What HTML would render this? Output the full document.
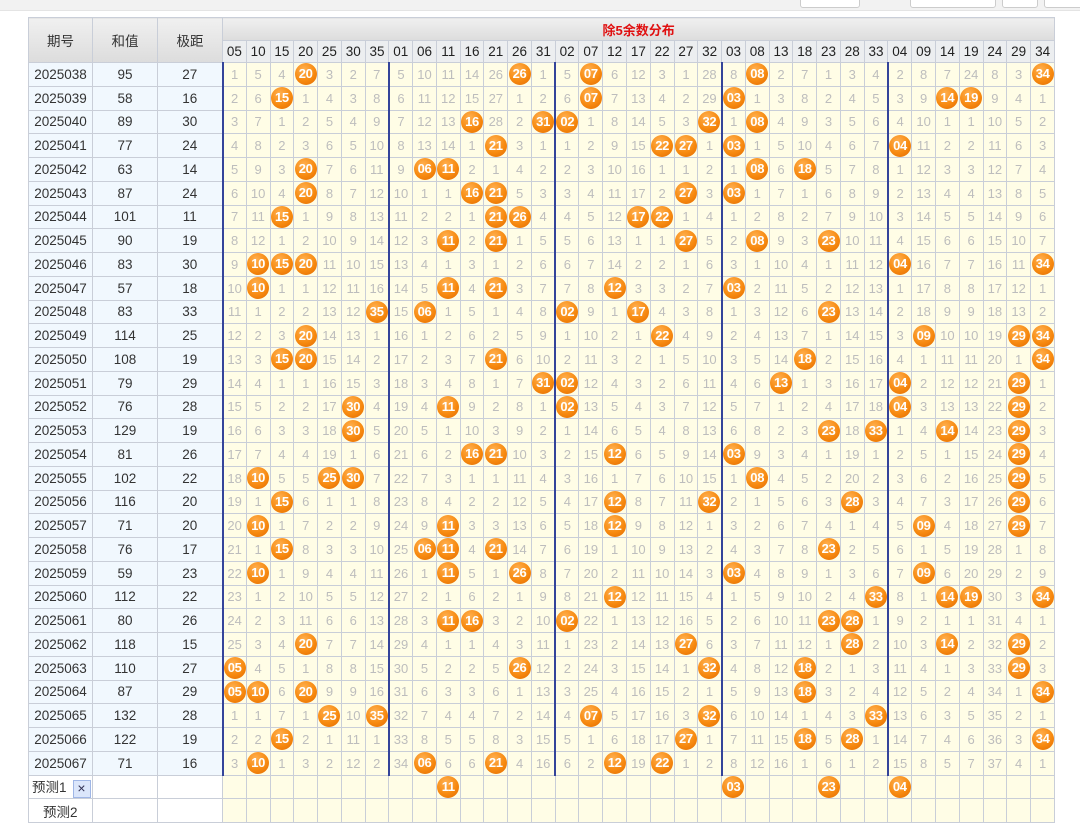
<!DOCTYPE html>
<html><head><meta charset="utf-8"><style>
html,body{margin:0;padding:0;background:#fff;width:1080px;height:810px;overflow:hidden;font-family:"Liberation Sans","Noto Sans CJK SC",sans-serif}
.top{position:absolute;left:0;top:0;width:1080px;height:10px;background:#f2f2f2;border-bottom:1px solid #e4e4e4}
.top span{position:absolute;top:-6px;height:12px;background:#fff;border:1px solid #ccc;border-radius:3px}
table{position:absolute;left:28px;top:17px;border-collapse:collapse;table-layout:fixed;width:1026px}
td,th{border:1px solid #c9ced8;padding:0;text-align:center;font-size:13px;font-weight:normal;white-space:nowrap;overflow:hidden}
thead th{background:linear-gradient(#f0f0f0,#dcdcdc);color:#333;font-size:13.5px}
.h1 th{height:22px}
.h2 th{height:21px;background:#eceef0;color:#222;font-size:13.5px}
.t{color:#e01010!important;font-weight:bold!important;font-size:13px}
tbody tr{height:23.76px}
tbody th{background:#f1f8fe;color:#333;font-size:13.5px}
tbody td{background:#fffde6;color:#bdbdbd}
tbody tr.d td:nth-child(4),tbody tr.d td:nth-child(11),tbody tr.d td:nth-child(18),tbody tr.d td:nth-child(25),tbody tr.d td:nth-child(32){border-left:2px solid #34449a}
i{font-style:normal;display:inline-block;width:22px;height:22px;line-height:22px;border-radius:50%;background:radial-gradient(circle at 40% 30%,#ffb050 0%,#f78a10 55%,#e26a00 100%);color:#fff;font-weight:bold;font-size:13px;vertical-align:middle;letter-spacing:-0.3px}
.p th{background:#fff;text-align:left;padding-left:3px;color:#333}
.p th.e{background:#fff}
.x{display:inline-block;width:16px;height:16px;line-height:15px;background:#dbe6fb;border:1px solid #9fb6e6;color:#335;font-size:14px;text-align:center;margin-left:6px;vertical-align:middle}
</style></head><body>
<div class="top"><span style="left:800px;width:58px"></span><span style="left:910px;width:84px"></span><span style="left:1002px;width:34px"></span><span style="left:1044px;width:40px"></span></div>
<table>
<colgroup><col style="width:64px"><col style="width:65px"><col style="width:65px"><col span="35" style="width:23.77px"></colgroup>
<thead>
<tr class="h1"><th rowspan="2">期号</th><th rowspan="2">和值</th><th rowspan="2">极距</th><th colspan="35" class="t">除5余数分布</th></tr>
<tr class="h2"><th>05</th><th>10</th><th>15</th><th>20</th><th>25</th><th>30</th><th>35</th><th>01</th><th>06</th><th>11</th><th>16</th><th>21</th><th>26</th><th>31</th><th>02</th><th>07</th><th>12</th><th>17</th><th>22</th><th>27</th><th>32</th><th>03</th><th>08</th><th>13</th><th>18</th><th>23</th><th>28</th><th>33</th><th>04</th><th>09</th><th>14</th><th>19</th><th>24</th><th>29</th><th>34</th></tr>
</thead>
<tbody>
<tr class="d"><th>2025038</th><th>95</th><th>27</th><td>1</td><td>5</td><td>4</td><td><i>20</i></td><td>3</td><td>2</td><td>7</td><td>5</td><td>10</td><td>11</td><td>14</td><td>26</td><td><i>26</i></td><td>1</td><td>5</td><td><i>07</i></td><td>6</td><td>12</td><td>3</td><td>1</td><td>28</td><td>8</td><td><i>08</i></td><td>2</td><td>7</td><td>1</td><td>3</td><td>4</td><td>2</td><td>8</td><td>7</td><td>24</td><td>8</td><td>3</td><td><i>34</i></td></tr>
<tr class="d"><th>2025039</th><th>58</th><th>16</th><td>2</td><td>6</td><td><i>15</i></td><td>1</td><td>4</td><td>3</td><td>8</td><td>6</td><td>11</td><td>12</td><td>15</td><td>27</td><td>1</td><td>2</td><td>6</td><td><i>07</i></td><td>7</td><td>13</td><td>4</td><td>2</td><td>29</td><td><i>03</i></td><td>1</td><td>3</td><td>8</td><td>2</td><td>4</td><td>5</td><td>3</td><td>9</td><td><i>14</i></td><td><i>19</i></td><td>9</td><td>4</td><td>1</td></tr>
<tr class="d"><th>2025040</th><th>89</th><th>30</th><td>3</td><td>7</td><td>1</td><td>2</td><td>5</td><td>4</td><td>9</td><td>7</td><td>12</td><td>13</td><td><i>16</i></td><td>28</td><td>2</td><td><i>31</i></td><td><i>02</i></td><td>1</td><td>8</td><td>14</td><td>5</td><td>3</td><td><i>32</i></td><td>1</td><td><i>08</i></td><td>4</td><td>9</td><td>3</td><td>5</td><td>6</td><td>4</td><td>10</td><td>1</td><td>1</td><td>10</td><td>5</td><td>2</td></tr>
<tr class="d"><th>2025041</th><th>77</th><th>24</th><td>4</td><td>8</td><td>2</td><td>3</td><td>6</td><td>5</td><td>10</td><td>8</td><td>13</td><td>14</td><td>1</td><td><i>21</i></td><td>3</td><td>1</td><td>1</td><td>2</td><td>9</td><td>15</td><td><i>22</i></td><td><i>27</i></td><td>1</td><td><i>03</i></td><td>1</td><td>5</td><td>10</td><td>4</td><td>6</td><td>7</td><td><i>04</i></td><td>11</td><td>2</td><td>2</td><td>11</td><td>6</td><td>3</td></tr>
<tr class="d"><th>2025042</th><th>63</th><th>14</th><td>5</td><td>9</td><td>3</td><td><i>20</i></td><td>7</td><td>6</td><td>11</td><td>9</td><td><i>06</i></td><td><i>11</i></td><td>2</td><td>1</td><td>4</td><td>2</td><td>2</td><td>3</td><td>10</td><td>16</td><td>1</td><td>1</td><td>2</td><td>1</td><td><i>08</i></td><td>6</td><td><i>18</i></td><td>5</td><td>7</td><td>8</td><td>1</td><td>12</td><td>3</td><td>3</td><td>12</td><td>7</td><td>4</td></tr>
<tr class="d"><th>2025043</th><th>87</th><th>24</th><td>6</td><td>10</td><td>4</td><td><i>20</i></td><td>8</td><td>7</td><td>12</td><td>10</td><td>1</td><td>1</td><td><i>16</i></td><td><i>21</i></td><td>5</td><td>3</td><td>3</td><td>4</td><td>11</td><td>17</td><td>2</td><td><i>27</i></td><td>3</td><td><i>03</i></td><td>1</td><td>7</td><td>1</td><td>6</td><td>8</td><td>9</td><td>2</td><td>13</td><td>4</td><td>4</td><td>13</td><td>8</td><td>5</td></tr>
<tr class="d"><th>2025044</th><th>101</th><th>11</th><td>7</td><td>11</td><td><i>15</i></td><td>1</td><td>9</td><td>8</td><td>13</td><td>11</td><td>2</td><td>2</td><td>1</td><td><i>21</i></td><td><i>26</i></td><td>4</td><td>4</td><td>5</td><td>12</td><td><i>17</i></td><td><i>22</i></td><td>1</td><td>4</td><td>1</td><td>2</td><td>8</td><td>2</td><td>7</td><td>9</td><td>10</td><td>3</td><td>14</td><td>5</td><td>5</td><td>14</td><td>9</td><td>6</td></tr>
<tr class="d"><th>2025045</th><th>90</th><th>19</th><td>8</td><td>12</td><td>1</td><td>2</td><td>10</td><td>9</td><td>14</td><td>12</td><td>3</td><td><i>11</i></td><td>2</td><td><i>21</i></td><td>1</td><td>5</td><td>5</td><td>6</td><td>13</td><td>1</td><td>1</td><td><i>27</i></td><td>5</td><td>2</td><td><i>08</i></td><td>9</td><td>3</td><td><i>23</i></td><td>10</td><td>11</td><td>4</td><td>15</td><td>6</td><td>6</td><td>15</td><td>10</td><td>7</td></tr>
<tr class="d"><th>2025046</th><th>83</th><th>30</th><td>9</td><td><i>10</i></td><td><i>15</i></td><td><i>20</i></td><td>11</td><td>10</td><td>15</td><td>13</td><td>4</td><td>1</td><td>3</td><td>1</td><td>2</td><td>6</td><td>6</td><td>7</td><td>14</td><td>2</td><td>2</td><td>1</td><td>6</td><td>3</td><td>1</td><td>10</td><td>4</td><td>1</td><td>11</td><td>12</td><td><i>04</i></td><td>16</td><td>7</td><td>7</td><td>16</td><td>11</td><td><i>34</i></td></tr>
<tr class="d"><th>2025047</th><th>57</th><th>18</th><td>10</td><td><i>10</i></td><td>1</td><td>1</td><td>12</td><td>11</td><td>16</td><td>14</td><td>5</td><td><i>11</i></td><td>4</td><td><i>21</i></td><td>3</td><td>7</td><td>7</td><td>8</td><td><i>12</i></td><td>3</td><td>3</td><td>2</td><td>7</td><td><i>03</i></td><td>2</td><td>11</td><td>5</td><td>2</td><td>12</td><td>13</td><td>1</td><td>17</td><td>8</td><td>8</td><td>17</td><td>12</td><td>1</td></tr>
<tr class="d"><th>2025048</th><th>83</th><th>33</th><td>11</td><td>1</td><td>2</td><td>2</td><td>13</td><td>12</td><td><i>35</i></td><td>15</td><td><i>06</i></td><td>1</td><td>5</td><td>1</td><td>4</td><td>8</td><td><i>02</i></td><td>9</td><td>1</td><td><i>17</i></td><td>4</td><td>3</td><td>8</td><td>1</td><td>3</td><td>12</td><td>6</td><td><i>23</i></td><td>13</td><td>14</td><td>2</td><td>18</td><td>9</td><td>9</td><td>18</td><td>13</td><td>2</td></tr>
<tr class="d"><th>2025049</th><th>114</th><th>25</th><td>12</td><td>2</td><td>3</td><td><i>20</i></td><td>14</td><td>13</td><td>1</td><td>16</td><td>1</td><td>2</td><td>6</td><td>2</td><td>5</td><td>9</td><td>1</td><td>10</td><td>2</td><td>1</td><td><i>22</i></td><td>4</td><td>9</td><td>2</td><td>4</td><td>13</td><td>7</td><td>1</td><td>14</td><td>15</td><td>3</td><td><i>09</i></td><td>10</td><td>10</td><td>19</td><td><i>29</i></td><td><i>34</i></td></tr>
<tr class="d"><th>2025050</th><th>108</th><th>19</th><td>13</td><td>3</td><td><i>15</i></td><td><i>20</i></td><td>15</td><td>14</td><td>2</td><td>17</td><td>2</td><td>3</td><td>7</td><td><i>21</i></td><td>6</td><td>10</td><td>2</td><td>11</td><td>3</td><td>2</td><td>1</td><td>5</td><td>10</td><td>3</td><td>5</td><td>14</td><td><i>18</i></td><td>2</td><td>15</td><td>16</td><td>4</td><td>1</td><td>11</td><td>11</td><td>20</td><td>1</td><td><i>34</i></td></tr>
<tr class="d"><th>2025051</th><th>79</th><th>29</th><td>14</td><td>4</td><td>1</td><td>1</td><td>16</td><td>15</td><td>3</td><td>18</td><td>3</td><td>4</td><td>8</td><td>1</td><td>7</td><td><i>31</i></td><td><i>02</i></td><td>12</td><td>4</td><td>3</td><td>2</td><td>6</td><td>11</td><td>4</td><td>6</td><td><i>13</i></td><td>1</td><td>3</td><td>16</td><td>17</td><td><i>04</i></td><td>2</td><td>12</td><td>12</td><td>21</td><td><i>29</i></td><td>1</td></tr>
<tr class="d"><th>2025052</th><th>76</th><th>28</th><td>15</td><td>5</td><td>2</td><td>2</td><td>17</td><td><i>30</i></td><td>4</td><td>19</td><td>4</td><td><i>11</i></td><td>9</td><td>2</td><td>8</td><td>1</td><td><i>02</i></td><td>13</td><td>5</td><td>4</td><td>3</td><td>7</td><td>12</td><td>5</td><td>7</td><td>1</td><td>2</td><td>4</td><td>17</td><td>18</td><td><i>04</i></td><td>3</td><td>13</td><td>13</td><td>22</td><td><i>29</i></td><td>2</td></tr>
<tr class="d"><th>2025053</th><th>129</th><th>19</th><td>16</td><td>6</td><td>3</td><td>3</td><td>18</td><td><i>30</i></td><td>5</td><td>20</td><td>5</td><td>1</td><td>10</td><td>3</td><td>9</td><td>2</td><td>1</td><td>14</td><td>6</td><td>5</td><td>4</td><td>8</td><td>13</td><td>6</td><td>8</td><td>2</td><td>3</td><td><i>23</i></td><td>18</td><td><i>33</i></td><td>1</td><td>4</td><td><i>14</i></td><td>14</td><td>23</td><td><i>29</i></td><td>3</td></tr>
<tr class="d"><th>2025054</th><th>81</th><th>26</th><td>17</td><td>7</td><td>4</td><td>4</td><td>19</td><td>1</td><td>6</td><td>21</td><td>6</td><td>2</td><td><i>16</i></td><td><i>21</i></td><td>10</td><td>3</td><td>2</td><td>15</td><td><i>12</i></td><td>6</td><td>5</td><td>9</td><td>14</td><td><i>03</i></td><td>9</td><td>3</td><td>4</td><td>1</td><td>19</td><td>1</td><td>2</td><td>5</td><td>1</td><td>15</td><td>24</td><td><i>29</i></td><td>4</td></tr>
<tr class="d"><th>2025055</th><th>102</th><th>22</th><td>18</td><td><i>10</i></td><td>5</td><td>5</td><td><i>25</i></td><td><i>30</i></td><td>7</td><td>22</td><td>7</td><td>3</td><td>1</td><td>1</td><td>11</td><td>4</td><td>3</td><td>16</td><td>1</td><td>7</td><td>6</td><td>10</td><td>15</td><td>1</td><td><i>08</i></td><td>4</td><td>5</td><td>2</td><td>20</td><td>2</td><td>3</td><td>6</td><td>2</td><td>16</td><td>25</td><td><i>29</i></td><td>5</td></tr>
<tr class="d"><th>2025056</th><th>116</th><th>20</th><td>19</td><td>1</td><td><i>15</i></td><td>6</td><td>1</td><td>1</td><td>8</td><td>23</td><td>8</td><td>4</td><td>2</td><td>2</td><td>12</td><td>5</td><td>4</td><td>17</td><td><i>12</i></td><td>8</td><td>7</td><td>11</td><td><i>32</i></td><td>2</td><td>1</td><td>5</td><td>6</td><td>3</td><td><i>28</i></td><td>3</td><td>4</td><td>7</td><td>3</td><td>17</td><td>26</td><td><i>29</i></td><td>6</td></tr>
<tr class="d"><th>2025057</th><th>71</th><th>20</th><td>20</td><td><i>10</i></td><td>1</td><td>7</td><td>2</td><td>2</td><td>9</td><td>24</td><td>9</td><td><i>11</i></td><td>3</td><td>3</td><td>13</td><td>6</td><td>5</td><td>18</td><td><i>12</i></td><td>9</td><td>8</td><td>12</td><td>1</td><td>3</td><td>2</td><td>6</td><td>7</td><td>4</td><td>1</td><td>4</td><td>5</td><td><i>09</i></td><td>4</td><td>18</td><td>27</td><td><i>29</i></td><td>7</td></tr>
<tr class="d"><th>2025058</th><th>76</th><th>17</th><td>21</td><td>1</td><td><i>15</i></td><td>8</td><td>3</td><td>3</td><td>10</td><td>25</td><td><i>06</i></td><td><i>11</i></td><td>4</td><td><i>21</i></td><td>14</td><td>7</td><td>6</td><td>19</td><td>1</td><td>10</td><td>9</td><td>13</td><td>2</td><td>4</td><td>3</td><td>7</td><td>8</td><td><i>23</i></td><td>2</td><td>5</td><td>6</td><td>1</td><td>5</td><td>19</td><td>28</td><td>1</td><td>8</td></tr>
<tr class="d"><th>2025059</th><th>59</th><th>23</th><td>22</td><td><i>10</i></td><td>1</td><td>9</td><td>4</td><td>4</td><td>11</td><td>26</td><td>1</td><td><i>11</i></td><td>5</td><td>1</td><td><i>26</i></td><td>8</td><td>7</td><td>20</td><td>2</td><td>11</td><td>10</td><td>14</td><td>3</td><td><i>03</i></td><td>4</td><td>8</td><td>9</td><td>1</td><td>3</td><td>6</td><td>7</td><td><i>09</i></td><td>6</td><td>20</td><td>29</td><td>2</td><td>9</td></tr>
<tr class="d"><th>2025060</th><th>112</th><th>22</th><td>23</td><td>1</td><td>2</td><td>10</td><td>5</td><td>5</td><td>12</td><td>27</td><td>2</td><td>1</td><td>6</td><td>2</td><td>1</td><td>9</td><td>8</td><td>21</td><td><i>12</i></td><td>12</td><td>11</td><td>15</td><td>4</td><td>1</td><td>5</td><td>9</td><td>10</td><td>2</td><td>4</td><td><i>33</i></td><td>8</td><td>1</td><td><i>14</i></td><td><i>19</i></td><td>30</td><td>3</td><td><i>34</i></td></tr>
<tr class="d"><th>2025061</th><th>80</th><th>26</th><td>24</td><td>2</td><td>3</td><td>11</td><td>6</td><td>6</td><td>13</td><td>28</td><td>3</td><td><i>11</i></td><td><i>16</i></td><td>3</td><td>2</td><td>10</td><td><i>02</i></td><td>22</td><td>1</td><td>13</td><td>12</td><td>16</td><td>5</td><td>2</td><td>6</td><td>10</td><td>11</td><td><i>23</i></td><td><i>28</i></td><td>1</td><td>9</td><td>2</td><td>1</td><td>1</td><td>31</td><td>4</td><td>1</td></tr>
<tr class="d"><th>2025062</th><th>118</th><th>15</th><td>25</td><td>3</td><td>4</td><td><i>20</i></td><td>7</td><td>7</td><td>14</td><td>29</td><td>4</td><td>1</td><td>1</td><td>4</td><td>3</td><td>11</td><td>1</td><td>23</td><td>2</td><td>14</td><td>13</td><td><i>27</i></td><td>6</td><td>3</td><td>7</td><td>11</td><td>12</td><td>1</td><td><i>28</i></td><td>2</td><td>10</td><td>3</td><td><i>14</i></td><td>2</td><td>32</td><td><i>29</i></td><td>2</td></tr>
<tr class="d"><th>2025063</th><th>110</th><th>27</th><td><i>05</i></td><td>4</td><td>5</td><td>1</td><td>8</td><td>8</td><td>15</td><td>30</td><td>5</td><td>2</td><td>2</td><td>5</td><td><i>26</i></td><td>12</td><td>2</td><td>24</td><td>3</td><td>15</td><td>14</td><td>1</td><td><i>32</i></td><td>4</td><td>8</td><td>12</td><td><i>18</i></td><td>2</td><td>1</td><td>3</td><td>11</td><td>4</td><td>1</td><td>3</td><td>33</td><td><i>29</i></td><td>3</td></tr>
<tr class="d"><th>2025064</th><th>87</th><th>29</th><td><i>05</i></td><td><i>10</i></td><td>6</td><td><i>20</i></td><td>9</td><td>9</td><td>16</td><td>31</td><td>6</td><td>3</td><td>3</td><td>6</td><td>1</td><td>13</td><td>3</td><td>25</td><td>4</td><td>16</td><td>15</td><td>2</td><td>1</td><td>5</td><td>9</td><td>13</td><td><i>18</i></td><td>3</td><td>2</td><td>4</td><td>12</td><td>5</td><td>2</td><td>4</td><td>34</td><td>1</td><td><i>34</i></td></tr>
<tr class="d"><th>2025065</th><th>132</th><th>28</th><td>1</td><td>1</td><td>7</td><td>1</td><td><i>25</i></td><td>10</td><td><i>35</i></td><td>32</td><td>7</td><td>4</td><td>4</td><td>7</td><td>2</td><td>14</td><td>4</td><td><i>07</i></td><td>5</td><td>17</td><td>16</td><td>3</td><td><i>32</i></td><td>6</td><td>10</td><td>14</td><td>1</td><td>4</td><td>3</td><td><i>33</i></td><td>13</td><td>6</td><td>3</td><td>5</td><td>35</td><td>2</td><td>1</td></tr>
<tr class="d"><th>2025066</th><th>122</th><th>19</th><td>2</td><td>2</td><td><i>15</i></td><td>2</td><td>1</td><td>11</td><td>1</td><td>33</td><td>8</td><td>5</td><td>5</td><td>8</td><td>3</td><td>15</td><td>5</td><td>1</td><td>6</td><td>18</td><td>17</td><td><i>27</i></td><td>1</td><td>7</td><td>11</td><td>15</td><td><i>18</i></td><td>5</td><td><i>28</i></td><td>1</td><td>14</td><td>7</td><td>4</td><td>6</td><td>36</td><td>3</td><td><i>34</i></td></tr>
<tr class="d"><th>2025067</th><th>71</th><th>16</th><td>3</td><td><i>10</i></td><td>1</td><td>3</td><td>2</td><td>12</td><td>2</td><td>34</td><td><i>06</i></td><td>6</td><td>6</td><td><i>21</i></td><td>4</td><td>16</td><td>6</td><td>2</td><td><i>12</i></td><td>19</td><td><i>22</i></td><td>1</td><td>2</td><td>8</td><td>12</td><td>16</td><td>1</td><td>6</td><td>1</td><td>2</td><td>15</td><td>8</td><td>5</td><td>7</td><td>37</td><td>4</td><td>1</td></tr>
<tr class="p"><th>预测1<span class="x">×</span></th><th class="e"></th><th class="e"></th><td></td><td></td><td></td><td></td><td></td><td></td><td></td><td></td><td></td><td><i>11</i></td><td></td><td></td><td></td><td></td><td></td><td></td><td></td><td></td><td></td><td></td><td></td><td><i>03</i></td><td></td><td></td><td></td><td><i>23</i></td><td></td><td></td><td><i>04</i></td><td></td><td></td><td></td><td></td><td></td><td></td></tr>
<tr class="p"><th style="padding-left:14px">预测2</th><th class="e"></th><th class="e"></th><td></td><td></td><td></td><td></td><td></td><td></td><td></td><td></td><td></td><td></td><td></td><td></td><td></td><td></td><td></td><td></td><td></td><td></td><td></td><td></td><td></td><td></td><td></td><td></td><td></td><td></td><td></td><td></td><td></td><td></td><td></td><td></td><td></td><td></td><td></td></tr>
</tbody>
</table>
</body></html>
